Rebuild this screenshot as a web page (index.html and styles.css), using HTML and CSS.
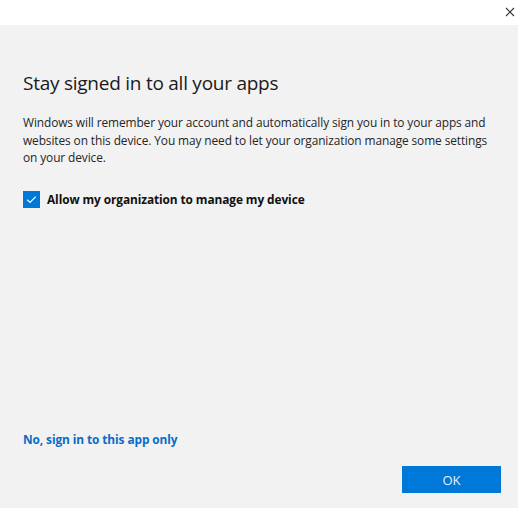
FILE: index.html
```html
<!DOCTYPE html>
<html lang="en">
<head>
<meta charset="utf-8">
<link rel="stylesheet" href="styles.css">
</head>
<body>
<div class="dialog">
  <div class="titlebar">
    <svg class="close" width="10" height="10" viewBox="0 0 10 10"><path d="M1 1L9 9M9 1L1 9" stroke="#333" stroke-width="1.1" fill="none"/></svg>
  </div>
  <div class="content">
    <h1 class="title">Stay signed in to all your apps</h1>
    <p class="desc">Windows will remember your account and automatically sign you in to your apps and websites on this device. You may need to let your organization manage some settings on your device.</p>
    <label class="check-row">
      <span class="checkbox"><svg width="17" height="17" viewBox="0 0 17 17"><path d="M4.2 8.8L7 11.5L12.8 5.6" stroke="#fff" stroke-width="1.2" fill="none"/></svg></span>
      <span class="check-label">Allow my organization to manage my device</span>
    </label>
    <div class="spacer"></div>
    <a class="link">No, sign in to this app only</a>
    <div class="actions">
      <button class="ok">OK</button>
    </div>
  </div>
</div>
</body>
</html>
```

FILE: styles.css
```css
html, body {
  margin: 0;
  padding: 0;
}
body {
  width: 518px;
  height: 508px;
  background: #f2f2f2;
  font-family: "Open Sans", "Noto Sans", sans-serif;
  color: #1a1a1a;
}
.dialog {
  display: flex;
  flex-direction: column;
  height: 508px;
}
.titlebar {
  height: 25px;
  background: #ffffff;
  display: flex;
  justify-content: flex-end;
  align-items: center;
  padding-right: 3px;
}
.close {
  display: block;
  margin-top: -1px;
}
.content {
  flex: 1;
  display: flex;
  flex-direction: column;
  padding: 0 17px 15px 23px;
}
.title {
  margin: 45px 0 0 0;
  font-size: 19px;
  font-weight: 400;
  line-height: 26px;
  color: #1a1a1a;
  letter-spacing: -0.25px;
}
.desc {
  margin: 18px 0 0 0;
  font-size: 11.9px;
  line-height: 17.5px;
  color: #262626;
  letter-spacing: -0.1px;
}
.check-row {
  display: flex;
  align-items: center;
  margin-top: 24px;
  gap: 7px;
}
.checkbox {
  width: 17px;
  height: 17px;
  background: #0078d7;
  display: flex;
}
.check-label {
  font-size: 11.9px;
  font-weight: 700;
  color: #111;
  letter-spacing: -0.1px;
}
.spacer {
  flex: 1;
}
.link {
  font-size: 11.9px;
  font-weight: 700;
  color: #0a6cc9;
  letter-spacing: -0.1px;
  line-height: 17px;
}
.actions {
  display: flex;
  justify-content: flex-end;
  margin-top: 18px;
}
.ok {
  width: 99px;
  height: 27px;
  border: none;
  background: #0078d7;
  color: #e8f1fb;
  font-family: "Open Sans", "Noto Sans", sans-serif;
  font-size: 13px;
  padding: 0;
}
```
